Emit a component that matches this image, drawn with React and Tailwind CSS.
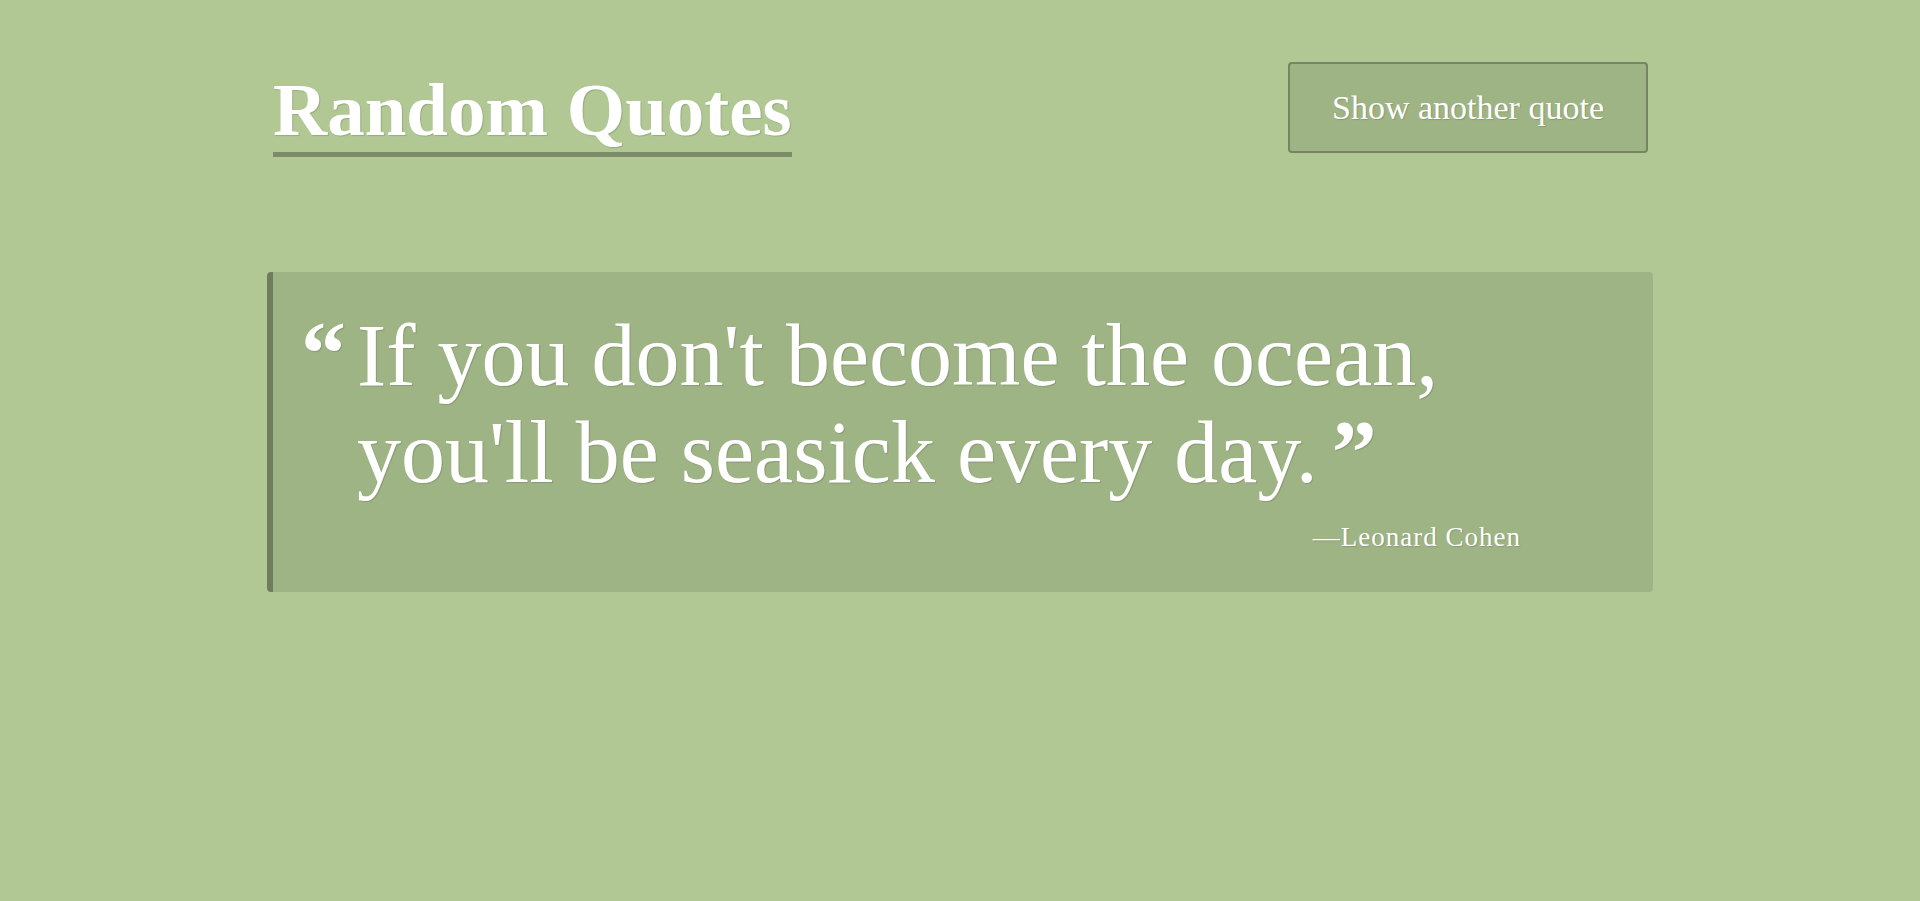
export default function App() {
  return (
    <div className="min-h-[901px] w-full bg-[#b1c894] text-white [font-family:'Liberation_Serif',serif]">
      <div className="mx-auto w-[1386px] pt-[62px]">
        <header className="flex items-start justify-between pl-[6px] pr-[5px]">
          <h1 className="mt-[5px] inline-block border-b-[5px] border-[#7c8c68] text-[75px] font-bold leading-[85px] [text-shadow:1px_1px_1px_rgba(0,0,0,0.15)]">
            Random Quotes
          </h1>
          <button className="flex h-[91px] w-[360px] items-center justify-center rounded-[4px] border-2 border-[#74855f] bg-[#9fb484] text-[34px] [text-shadow:1px_1px_1px_rgba(0,0,0,0.15)]">
            Show another quote
          </button>
        </header>
        <section className="mt-[115px] flex h-[320px] flex-col rounded-[4px] border-l-[6px] border-[#6f7d5c] bg-[#9fb485] pl-[28px] pt-[35px]">
          <div className="flex items-start">
            <span className="mt-[2px] w-[56px] shrink-0 text-[90px] font-bold leading-[90px] [text-shadow:1px_1px_1px_rgba(0,0,0,0.15)]">
              &ldquo;
            </span>
            <p className="w-[1150px] text-[88px] leading-[97px] [text-shadow:1px_1px_1px_rgba(0,0,0,0.15)]">
              If you don't become the ocean, you'll be seasick every day.
              <span className="ml-[14px] align-[-1px] text-[90px] font-bold leading-[0]">&rdquo;</span>
            </p>
          </div>
          <div className="mt-[20px] w-[1220px] text-right text-[27px] leading-[32px] tracking-[1px] [text-shadow:1px_1px_1px_rgba(0,0,0,0.15)]">
            &mdash;Leonard Cohen
          </div>
        </section>
      </div>
    </div>
  );
}
